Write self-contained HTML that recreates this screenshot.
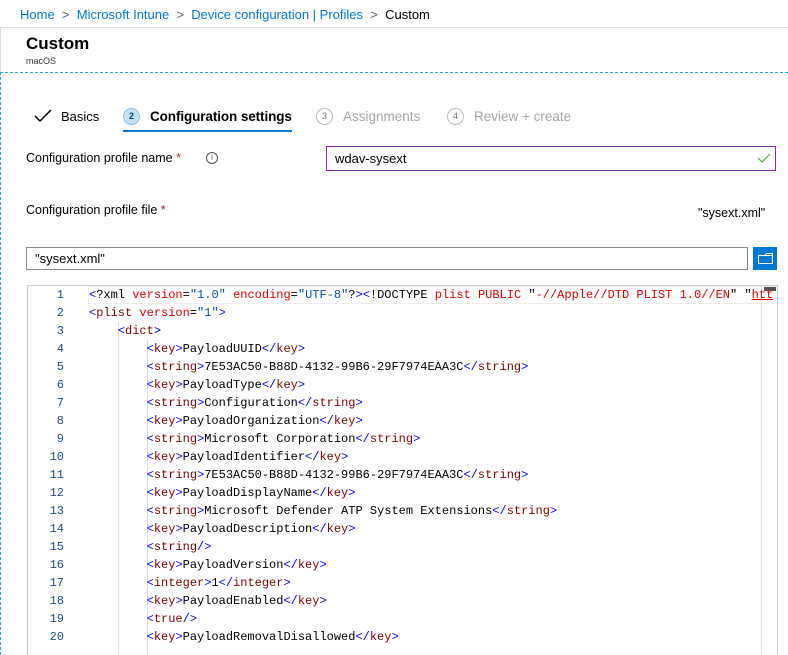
<!DOCTYPE html>
<html><head><style>
*{margin:0;padding:0;box-sizing:border-box}
body{width:788px;height:655px;overflow:hidden;background:#fff;font-family:"Liberation Sans",sans-serif;color:#000;position:relative}
.a{position:absolute;white-space:nowrap}
.bc{top:7px;font-size:13px;color:#0078d4}
.code{position:absolute;left:27px;top:285px;width:751px;height:370px;border:1px solid #ccc;border-bottom:none;overflow:hidden;font-family:"Liberation Mono",monospace;font-size:12px}
.ln{position:absolute;left:0;width:36px;text-align:right;color:#1e4f8f;font-size:12px}
.cl{position:absolute;left:61px;white-space:pre;color:#000}
.t{color:#0000ff}.n{color:#800000}.r{color:#e50000}.v{color:#0451a5}
</style></head><body>
<div class="a" style="left:0;top:0;width:788px;height:28px;border-bottom:1px solid #ddd;box-shadow:0 1px 2px #eee"></div>
<div class="a bc" style="left:20px">Home <span style="color:#666">&nbsp;&gt;&nbsp;</span> Microsoft Intune <span style="color:#666">&nbsp;&gt;&nbsp;</span> Device configuration | Profiles <span style="color:#666">&nbsp;&gt;&nbsp;</span> <span style="color:#000">Custom</span></div>
<div class="a" style="left:0;top:28px;width:1px;height:44px;background:#ddd"></div>
<div class="a" style="left:26px;top:34px;font-size:17px;font-weight:bold">Custom</div>
<div class="a" style="left:26px;top:56px;font-size:9px;color:#333">macOS</div>
<div class="a" style="left:0;top:72px;width:788px;border-top:1px dashed #1ea7e0"></div>
<div class="a" style="left:0;top:72px;height:583px;border-left:1px dashed #1ea7e0"></div>
<svg class="a" style="left:34px;top:109px" width="18" height="14"><path d="M1 7 L6 12 L17 1" stroke="#000" stroke-width="1.5" fill="none"/></svg>
<div class="a" style="left:61px;top:109px;font-size:13px">Basics</div>
<div class="a" style="left:123px;top:108px;width:17px;height:17px;border-radius:50%;background:#c7e0f4;border:1px solid #8cc0eb;font-size:9px;text-align:center;line-height:15px;color:#004578;font-weight:bold">2</div>
<div class="a" style="left:150px;top:109px;font-size:13.5px;font-weight:bold;letter-spacing:-0.1px">Configuration settings</div>
<div class="a" style="left:123px;top:130px;width:169px;height:2px;background:#0078d4"></div>
<div class="a" style="left:316px;top:108px;width:17px;height:17px;border-radius:50%;border:1px solid #bbb;font-size:9px;text-align:center;line-height:15px;color:#777">3</div>
<div class="a" style="left:343px;top:109px;font-size:13.5px;color:#a6a6a6">Assignments</div>
<div class="a" style="left:447px;top:108px;width:17px;height:17px;border-radius:50%;border:1px solid #bbb;font-size:9px;text-align:center;line-height:15px;color:#777">4</div>
<div class="a" style="left:474px;top:109px;font-size:13.5px;color:#a6a6a6">Review + create</div>
<div class="a" style="left:26px;top:151px;font-size:12.5px">Configuration profile name <span style="color:#a4262c">*</span></div>
<div class="a" style="left:206px;top:152px;width:12px;height:12px;border:1px solid #555;border-radius:50%;font-size:8px;text-align:center;line-height:10px;color:#555">i</div>
<div class="a" style="left:326px;top:146px;width:450px;height:25px;border:1px solid #8a2da5;font-size:13px;padding:4px 8px">wdav-sysext</div>
<svg class="a" style="left:757px;top:153px" width="14" height="11"><path d="M1 5 L5 9 L13 1" stroke="#4caa3c" stroke-width="1.2" fill="none"/></svg>
<div class="a" style="left:26px;top:203px;font-size:12.5px">Configuration profile file <span style="color:#a4262c">*</span></div>
<div class="a" style="left:698px;top:206px;font-size:12.5px">"sysext.xml"</div>
<div class="a" style="left:26px;top:247px;width:722px;height:23px;border:1px solid #888;font-size:13px;padding:3px 8px">"sysext.xml"</div>
<div class="a" style="left:753px;top:247px;width:24px;height:23px;background:#0078d4"></div>
<svg class="a" style="left:757px;top:251px" width="17" height="14"><path d="M1.5 4.5 H15.5 V12.5 H1.5 Z M8 4.5 L9.5 2.5 H15.5 V4.5" stroke="#fff" stroke-width="1" fill="none"/></svg>
<div class="code">
<div style="position:absolute;left:60px;top:0;width:690px;height:18px;border:1px solid #eee;background:#fff"></div>
<div style="position:absolute;left:90px;top:36px;height:340px;border-left:1px solid #ddd"></div>
<div style="position:absolute;left:119px;top:54px;height:320px;border-left:1px solid #ddd"></div>
<div style="position:absolute;left:733px;top:0;height:370px;border-left:1px solid #ddd"></div>
<div style="position:absolute;left:736px;top:1px;width:12px;height:4px;background:#555"></div>
<div id="lines"></div>
</div>
<script>
var L=[
'<span class="t">&lt;</span>?xml <span class="r">version</span>=<span class="v">"1.0"</span> <span class="r">encoding</span>=<span class="v">"UTF-8"</span>?<span class="t">&gt;&lt;</span>!DOCTYPE <span class="r">plist</span> <span class="r">PUBLIC</span> "<span class="r">-//Apple//DTD PLIST 1.0//EN</span>" "<span class="r" style="text-decoration:underline">htt</span>',
'<span class="t">&lt;</span><span class="n">plist</span> <span class="r">version</span>=<span class="v">"1"</span><span class="t">&gt;</span>',
'    <span class="t">&lt;</span><span class="n">dict</span><span class="t">&gt;</span>',
'k:PayloadUUID','s:7E53AC50-B88D-4132-99B6-29F7974EAA3C','k:PayloadType','s:Configuration','k:PayloadOrganization','s:Microsoft Corporation','k:PayloadIdentifier','s:7E53AC50-B88D-4132-99B6-29F7974EAA3C','k:PayloadDisplayName','s:Microsoft Defender ATP System Extensions','k:PayloadDescription',
'        <span class="t">&lt;</span><span class="n">string</span><span class="t">/&gt;</span>','k:PayloadVersion','i:1','k:PayloadEnabled',
'        <span class="t">&lt;</span><span class="n">true</span><span class="t">/&gt;</span>','k:PayloadRemovalDisallowed'];
function tg(n,x){return '<span class="t">&lt;</span><span class="n">'+n+'</span><span class="t">&gt;</span>'+x+'<span class="t">&lt;/</span><span class="n">'+n+'</span><span class="t">&gt;</span>';}
var h='';
L.forEach(function(s,i){
 var m={k:'key',s:'string',i:'integer'};
 if(/^[ksi]:/.test(s)){s='        '+tg(m[s[0]],s.slice(2));}
 var y=i*18+2;
 h+='<div class="ln" style="top:'+y+'px">'+(i+1)+'</div><div class="cl" style="top:'+y+'px">'+s+'</div>';
});
document.getElementById('lines').innerHTML=h;
</script>
</body></html>
